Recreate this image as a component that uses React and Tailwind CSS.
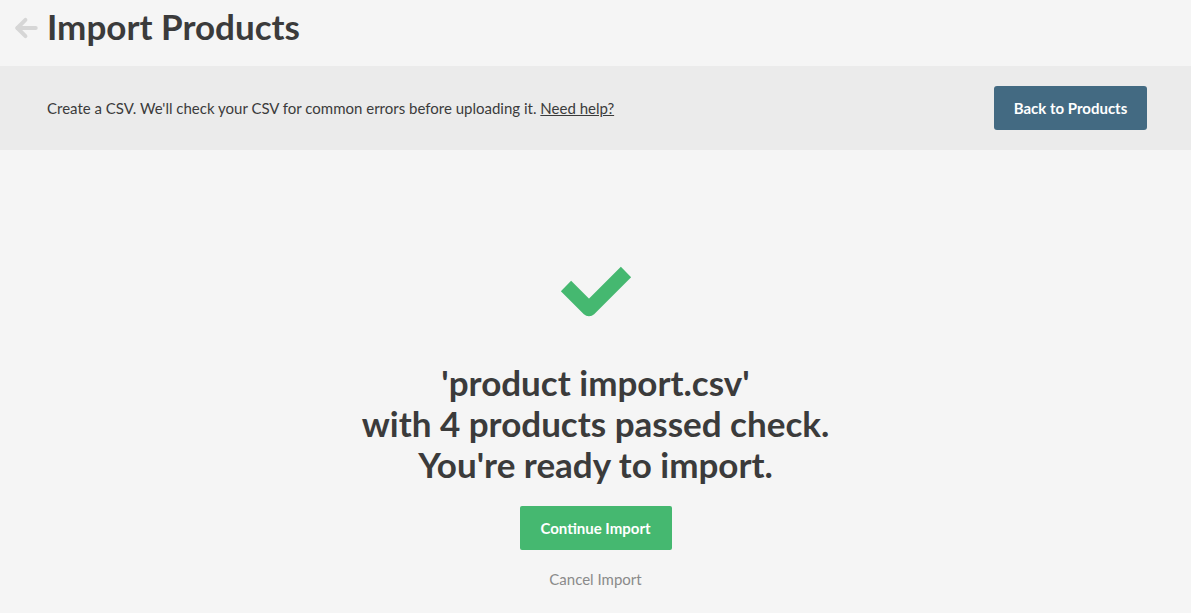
export default function App() {
  return (
    <div className="min-h-[613px] bg-[#f5f5f5] font-['Lato',sans-serif] text-[#3b3b3b]">
      {/* Header */}
      <div className="flex h-[66px] items-center pl-[13px]">
        <svg className="-mt-[10px]" width="26" height="26" viewBox="0 0 24 24" fill="none" stroke="#d6d6d6" strokeWidth="3.6" strokeLinecap="round" strokeLinejoin="round">
          <path d="M21 12H4" />
          <path d="M11.5 4.5L4 12l7.5 7.5" />
        </svg>
        <h1 className="ml-[8px] -mt-[14px] text-[35px] font-bold leading-none">Import Products</h1>
      </div>

      {/* Info band */}
      <div className="flex h-[84px] items-center justify-between bg-[#ebebeb] pl-[47px] pr-[44px]">
        <p className="text-[15px]">
          Create a CSV. We'll check your CSV for common errors before uploading it.{' '}
          <a href="#" className="underline">Need help?</a>
        </p>
        <button className="h-[44px] w-[153px] rounded-[3px] bg-[#436a82] text-[15px] font-bold text-white">
          Back to Products
        </button>
      </div>

      {/* Result */}
      <div className="flex flex-col items-center pt-[114px]">
        <svg width="72" height="56" viewBox="0 0 72 56" fill="none">
          <polyline points="6,22 29,45 66,8" stroke="#45b870" strokeWidth="14.5" strokeLinejoin="round" />
        </svg>
        <h2 className="mt-[42px] text-center text-[35px] font-bold leading-[41px]">
          'product import.csv'
          <br />
          with 4 products passed check.
          <br />
          You're ready to import.
        </h2>
        <button className="mt-[21px] h-[44px] w-[152px] rounded-[2px] bg-[#45b870] text-[15px] font-bold text-white">
          Continue Import
        </button>
        <a href="#" className="mt-[18px] text-[15px] text-[#8a8a8a]">Cancel Import</a>
      </div>
    </div>
  );
}
